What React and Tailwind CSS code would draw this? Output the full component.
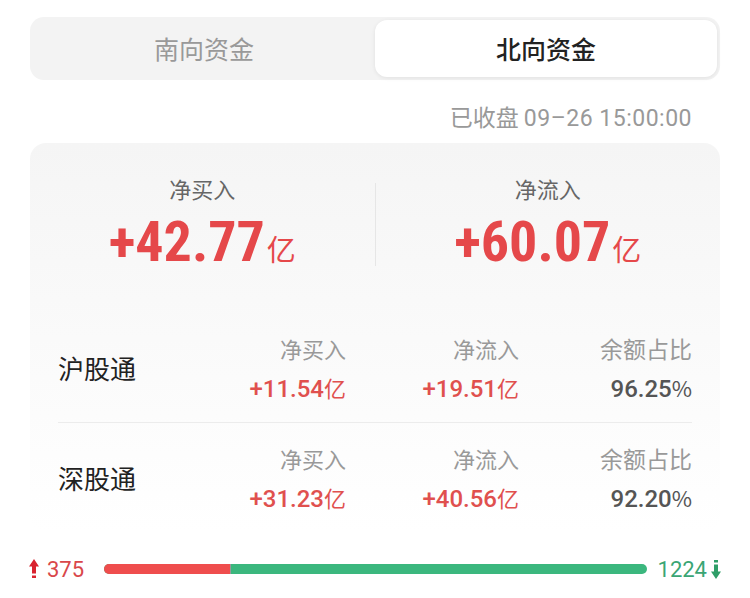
import { useState } from "react";

const cjk = "font-['Noto_Sans_CJK_SC',sans-serif]";
const num = "font-['Roboto','Noto_Sans_CJK_SC',sans-serif]";

const rows = [
  { name: "沪股通", buy: "+11.54", flow: "+19.51", ratio: "96.25" },
  { name: "深股通", buy: "+31.23", flow: "+40.56", ratio: "92.20" },
];

function UpArrow() {
  return (
    <svg width="10" height="20" viewBox="0 0 10 20" className="shrink-0">
      <path d="M5 0 L10 7.5 L7 7.5 L7 14.5 L3 14.5 L3 7.5 L0 7.5 Z" fill="#d9232f" />
      <rect x="3" y="16.5" width="4" height="2.5" fill="#d9232f" />
    </svg>
  );
}

function DownArrow() {
  return (
    <svg width="10" height="20" viewBox="0 0 10 20" className="shrink-0">
      <rect x="3" y="1" width="4" height="2.5" fill="#2f9e68" />
      <path d="M5 20 L10 12.5 L7 12.5 L7 5.5 L3 5.5 L3 12.5 L0 12.5 Z" fill="#2f9e68" />
    </svg>
  );
}

function Value({ value, unit, color, weight }) {
  return (
    <p className={`mt-[10px] h-[30px] flex items-baseline justify-end ${color}`}>
      <span className={`${num} text-[24px] leading-[30px] ${weight}`}>{value}</span>
      <span className="text-[22px] leading-[30px]">{unit}</span>
    </p>
  );
}

function App() {
  const [tab, setTab] = useState("north");
  const up = 375;
  const down = 1224;

  return (
    <div className={`w-[750px] h-[598px] bg-white overflow-hidden ${cjk}`}>
      <div className="mx-[30px] mt-[17px] h-[63px] rounded-[14px] bg-[#f3f3f3] p-[3px] flex">
        <button
          onClick={() => setTab("south")}
          className={`flex-1 rounded-[12px] text-[25px] ${
            tab === "south" ? "bg-white text-[#222] font-medium shadow-[0_1px_4px_rgba(0,0,0,0.08)]" : "text-[#999]"
          }`}
        >
          南向资金
        </button>
        <button
          onClick={() => setTab("north")}
          className={`flex-1 rounded-[12px] text-[25px] ${
            tab === "north" ? "bg-white text-[#222] font-medium shadow-[0_1px_4px_rgba(0,0,0,0.08)]" : "text-[#999]"
          }`}
        >
          北向资金
        </button>
      </div>

      <div className="mt-[22px] h-[28px] pr-[58px] text-right text-[23px] leading-[28px] text-[#999]">
        已收盘 <span className={`${num} tracking-[0.5px]`}>09–26 15:00:00</span>
      </div>

      <div className="mx-[30px] mt-[13px] rounded-[16px] bg-gradient-to-b from-[#f5f5f5] to-white">
        <div className="h-[170px] pt-[31px] flex items-start">
          <div className="flex-1 flex flex-col items-center">
            <p className="text-[22px] leading-[28px] text-[#666]">净买入</p>
            <p className="mt-[10px] h-[60px] text-[#e5484a] flex items-baseline">
              <span className={`${num} [font-stretch:75%] text-[56px] leading-[60px] font-bold`}>+42.77</span>
              <span className="text-[29px] leading-[60px] ml-[2px]">亿</span>
            </p>
          </div>
          <div className="w-px h-[83px] mt-[9px] bg-[#e6e6e6]"></div>
          <div className="flex-1 flex flex-col items-center">
            <p className="text-[22px] leading-[28px] text-[#666]">净流入</p>
            <p className="mt-[10px] h-[60px] text-[#e5484a] flex items-baseline">
              <span className={`${num} [font-stretch:75%] text-[56px] leading-[60px] font-bold`}>+60.07</span>
              <span className="text-[29px] leading-[60px] ml-[2px]">亿</span>
            </p>
          </div>
        </div>

        <div className="px-[28px]">
          {rows.map((row, i) => (
            <div
              key={row.name}
              className={`h-[109px] flex items-center ${i === 0 ? "border-b border-[#ececec] box-content" : ""}`}
            >
              <div className="flex-1 text-[26px] leading-[36px] text-[#222]">{row.name}</div>
              <div className="w-[173px] text-right">
                <p className="text-[22px] leading-[28px] text-[#999]">净买入</p>
                <Value value={row.buy} unit="亿" color="text-[#e0504e]" weight="font-medium" />
              </div>
              <div className="w-[173px] text-right">
                <p className="text-[22px] leading-[28px] text-[#999]">净流入</p>
                <Value value={row.flow} unit="亿" color="text-[#e0504e]" weight="font-medium" />
              </div>
              <div className="w-[173px] text-right">
                <p className="text-[23px] leading-[28px] text-[#999]">余额占比</p>
                <Value value={row.ratio} unit="%" color="text-[#555]" weight="font-medium" />
              </div>
            </div>
          ))}
        </div>
      </div>

      <div className="mx-[29px] mt-[25px] h-[24px] flex items-center">
        <UpArrow />
        <span className={`${num} ml-[8px] text-[22px] text-[#d9474a]`}>{up}</span>
        <div className="flex-1 ml-[20px] mr-[11px] h-[10px] rounded-full bg-[#3bb77e] overflow-hidden flex">
          <div
            className="h-full bg-[#ef4d4d] border-r border-[#999]"
            style={{ width: `${(up / (up + down)) * 100}%` }}
          ></div>
        </div>
        <span className={`${num} text-[22px] text-[#3aa574]`}>{down}</span>
        <span className="ml-[4px]">
          <DownArrow />
        </span>
      </div>
    </div>
  );
}

export default App;
